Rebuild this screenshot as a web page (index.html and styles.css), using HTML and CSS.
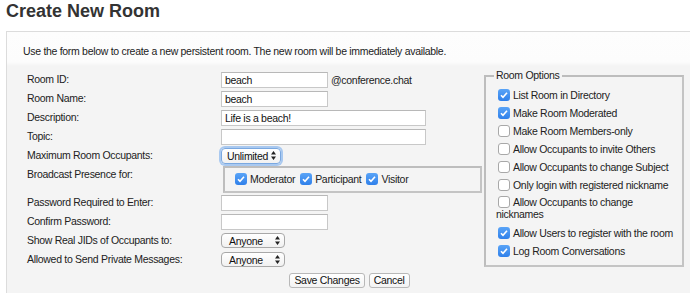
FILE: index.html
```html
<!DOCTYPE html>
<html lang="en">
  <head>
    <meta charset="UTF-8" />
    <title>Create New Room</title>
    <link rel="stylesheet" href="styles.css">
  </head>
  <body>
    <h1 class="pageTitle">Create New Room</h1>

    <div class="panel">
      <p class="intro">Use the form below to create a new persistent room. The new room will be immediately available.</p>

      <form name="createRoom" class="roomForm">
        <div class="columns">
          <!-- left: basic settings -->
          <div class="settings">
            <label class="label">Room ID:</label>
            <div class="field"><span class="textBox">beach</span><span class="suffix">@conference.chat</span></div>

            <label class="label">Room Name:</label>
            <div class="field"><span class="textBox">beach</span></div>

            <label class="label">Description:</label>
            <div class="field"><span class="textBox wide">Life is a beach!</span></div>

            <label class="label">Topic:</label>
            <div class="field"><span class="textBox wide"></span></div>

            <label class="label">Maximum Room Occupants:</label>
            <div class="field"><span class="selectBox focused">Unlimited<svg class="arrows" width="5" height="9" viewBox="0 0 5 9"><path d="M2.5 0L5 3.5H0z M2.5 9L0 5.5h5z" fill="#222"/></svg></span></div>

            <label class="label top">Broadcast Presence for:</label>
            <div class="field tall">
              <div class="presenceBox">
                <span class="check on"><svg width="12" height="12" viewBox="0 0 12 12"><path d="M3 6.2l2 2.1 4-4.6" fill="none" stroke="#fff" stroke-width="1.6"/></svg></span><span class="checkText">Moderator</span>
                <span class="check on"><svg width="12" height="12" viewBox="0 0 12 12"><path d="M3 6.2l2 2.1 4-4.6" fill="none" stroke="#fff" stroke-width="1.6"/></svg></span><span class="checkText">Participant</span>
                <span class="check on"><svg width="12" height="12" viewBox="0 0 12 12"><path d="M3 6.2l2 2.1 4-4.6" fill="none" stroke="#fff" stroke-width="1.6"/></svg></span><span class="checkText">Visitor</span>
              </div>
            </div>

            <label class="label">Password Required to Enter:</label>
            <div class="field"><span class="textBox"></span></div>

            <label class="label">Confirm Password:</label>
            <div class="field"><span class="textBox"></span></div>

            <label class="label">Show Real JIDs of Occupants to:</label>
            <div class="field"><span class="selectBox anyone">Anyone<svg class="arrows" width="5" height="9" viewBox="0 0 5 9"><path d="M2.5 0L5 3.5H0z M2.5 9L0 5.5h5z" fill="#222"/></svg></span></div>

            <label class="label">Allowed to Send Private Messages:</label>
            <div class="field"><span class="selectBox anyone">Anyone<svg class="arrows" width="5" height="9" viewBox="0 0 5 9"><path d="M2.5 0L5 3.5H0z M2.5 9L0 5.5h5z" fill="#222"/></svg></span></div>
          </div>

          <!-- right: room options -->
          <fieldset class="options">
            <legend>Room Options</legend>
            <div class="option"><span class="check on"><svg width="12" height="12" viewBox="0 0 12 12"><path d="M3 6.2l2 2.1 4-4.6" fill="none" stroke="#fff" stroke-width="1.6"/></svg></span>List Room in Directory</div>
            <div class="option"><span class="check on"><svg width="12" height="12" viewBox="0 0 12 12"><path d="M3 6.2l2 2.1 4-4.6" fill="none" stroke="#fff" stroke-width="1.6"/></svg></span>Make Room Moderated</div>
            <div class="option"><span class="check"></span>Make Room Members-only</div>
            <div class="option"><span class="check"></span>Allow Occupants to invite Others</div>
            <div class="option"><span class="check"></span>Allow Occupants to change Subject</div>
            <div class="option"><span class="check"></span>Only login with registered nickname</div>
            <div class="option wrap"><span class="check"></span>Allow Occupants to change<br>nicknames</div>
            <div class="option"><span class="check on"><svg width="12" height="12" viewBox="0 0 12 12"><path d="M3 6.2l2 2.1 4-4.6" fill="none" stroke="#fff" stroke-width="1.6"/></svg></span>Allow Users to register with the room</div>
            <div class="option"><span class="check on"><svg width="12" height="12" viewBox="0 0 12 12"><path d="M3 6.2l2 2.1 4-4.6" fill="none" stroke="#fff" stroke-width="1.6"/></svg></span>Log Room Conversations</div>
          </fieldset>
        </div>

        <div class="actions">
          <button type="button" class="btn">Save Changes</button>
          <button type="button" class="btn">Cancel</button>
        </div>
      </form>
    </div>
  </body>
</html>
```

FILE: styles.css
```css
*,
*:before,
*:after {
  margin: 0;
  padding: 0;
  box-sizing: border-box;
}

html,
body {
  font-family: "Liberation Sans", Arial, sans-serif;
}

body {
  margin: 0;
  padding: 0 0 0 6px;
  background-color: #fff;
  color: #222;
  font-size: 10.5px;
  letter-spacing: -0.3px;
  overflow: hidden;
}

.pageTitle {
  font-size: 18px;
  font-weight: 700;
  line-height: 22px;
  letter-spacing: 0;
  color: #333;
  height: 31px;
}

.panel {
  border-top: 1px solid #dcdcdc;
  border-left: 1px solid #dcdcdc;
  background: linear-gradient(#fdfdfd 0, #fcfcfc 30px, #f4f4f4 34px, #f4f4f4 100%);
  padding: 13px 0 10px 16px;
  width: 684px;
}

.intro {
  line-height: 13px;
  margin-bottom: 12px;
}

.columns {
  display: flex;
  align-items: flex-start;
}

.settings {
  display: grid;
  grid-template-columns: 194px 261px;
  grid-template-rows: 19px 19px 19px 19px 19px 28px;
  grid-auto-rows: 19px;
  padding-left: 4px;
}

.label {
  display: flex;
  align-items: center;
  line-height: 13px;
}

.label.top {
  align-items: flex-start;
  padding-top: 3px;
}

.field {
  display: flex;
  align-items: center;
}

.field.tall {
  align-items: flex-start;
}

.textBox {
  display: block;
  width: 107px;
  height: 16px;
  line-height: 14px;
  padding: 0 3px;
  background: #fff;
  border: 1px solid #c8c8c8;
  border-top-color: #b8b8b8;
  color: #111;
}

.textBox.wide {
  width: 205px;
}

.suffix {
  margin-left: 3px;
}

.selectBox {
  display: flex;
  align-items: center;
  justify-content: space-between;
  width: 60px;
  height: 16px;
  padding: 0 4px 0 5px;
  border: 1px solid #a8a8a8;
  border-radius: 4px;
  background: linear-gradient(#fff, #f1f1f1);
  color: #111;
  white-space: nowrap;
}

.selectBox .arrows {
  flex: none;
  margin-left: 2px;
}

.selectBox.focused {
  border-color: #7aa8e0;
  box-shadow: 0 0 0 2px #a9c9f0;
}

.selectBox.anyone {
  width: 64px;
  height: 15px;
  padding-left: 7px;
}

.presenceBox {
  display: flex;
  align-items: center;
  width: 259px;
  height: 27px;
  margin: 1px 0 0 2px;
  padding: 0 0 2px 10px;
  border: 2px solid #c4c4c4;
  border-top-color: #bdbdbd;
  border-left-color: #bdbdbd;
}

.check {
  display: inline-flex;
  flex: none;
  width: 12px;
  height: 12px;
  border-radius: 3px;
  background: #fff;
  border: 1px solid #a8a8a8;
  vertical-align: -2px;
}

.check svg {
  display: block;
  margin: -1px;
}

.check.on {
  border: 0;
  background: linear-gradient(#5aa4f7, #2f80ea);
}

.check.on svg {
  margin: 0;
}

.checkText {
  margin: 0 5px 0 3px;
}

.options {
  width: 200px;
  margin: -1px 0 0 2px;
  padding: 4px 3px 5px 10px;
  border: 2px solid #c4c4c4;
  border-top-color: #bdbdbd;
  border-left-color: #bdbdbd;
}

.options legend {
  padding: 0 2px;
  margin-left: -2px;
  line-height: 13px;
}

.option {
  height: 18px;
  line-height: 18px;
  white-space: nowrap;
}

.option .check {
  margin: 0 3px 0 2px;
}

.option.wrap {
  height: 30px;
  line-height: 12px;
  padding-top: 2px;
}

.actions {
  display: flex;
  justify-content: center;
  gap: 4px;
  width: 653px;
  margin-top: 4px;
}

.btn {
  height: 15px;
  padding: 0 4px;
  font-family: "Liberation Sans", Arial, sans-serif;
  font-size: 10.5px;
  letter-spacing: -0.3px;
  line-height: 13px;
  color: #111;
  background: linear-gradient(#fff, #f3f3f3);
  border: 1px solid #b8b8b8;
  border-radius: 3px;
}
```
